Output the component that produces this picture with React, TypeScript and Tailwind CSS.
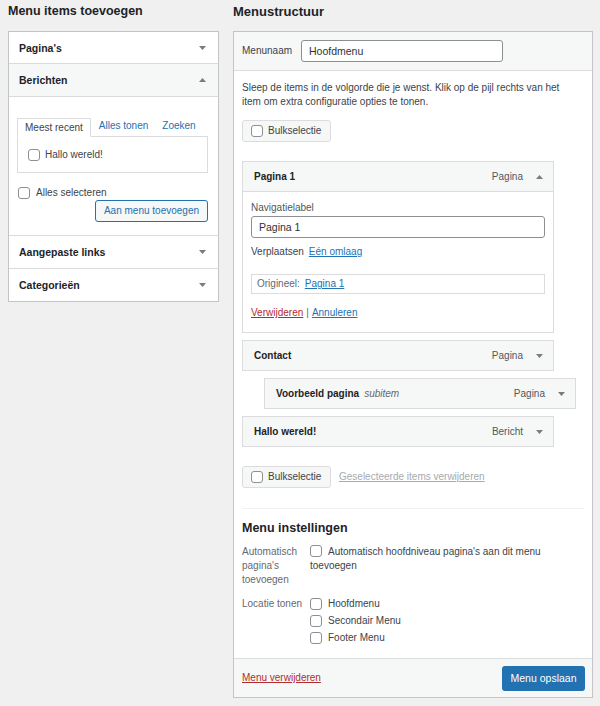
import React from 'react';

const Arrow = ({ up = false }: { up?: boolean }) => (
  <svg width="7" height="4" viewBox="0 0 7 4" className="shrink-0 text-[#787c82]">
    <polygon points={up ? '0,4 7,4 3.5,0' : '0,0 7,0 3.5,4'} fill="currentColor" />
  </svg>
);

const Check = ({ className = '' }: { className?: string }) => (
  <span className={`inline-block w-[12px] h-[12px] shrink-0 rounded-[3px] border border-[#8c8f94] bg-white ${className}`} />
);

const SectionHead = ({ label, open = false, h = 'h-[33px]' }: { label: string; open?: boolean; h?: string }) => (
  <div
    className={`flex items-center justify-between ${h} pl-[10px] pr-[12px] border-b border-[#dcdcde] ${
      open ? 'bg-[#f6f7f7]' : 'bg-white'
    }`}
  >
    <span className="text-[10.5px] font-bold text-[#1d2327]">{label}</span>
    <Arrow up={open} />
  </div>
);

const ItemHead = ({
  title,
  sub,
  type,
  open = false,
  className = '',
}: {
  title: string;
  sub?: string;
  type: string;
  open?: boolean;
  className?: string;
}) => (
  <div
    className={`flex items-center h-[31px] pl-[11px] pr-[10px] border border-[#dcdcde] bg-[#f6f7f7] ${className}`}
  >
    <span className="font-bold text-[#1d2327]">{title}</span>
    {sub && <span className="ml-[5px] italic text-[#646970]">{sub}</span>}
    <span className="ml-auto mr-[13px] text-[#50575e]">{type}</span>
    <Arrow up={open} />
  </div>
);

const BulkButton = () => (
  <div className="flex items-center w-[89px] h-[22px] pl-[8px] gap-[5px] rounded-[3px] border border-[#dcdcde] bg-[#f6f7f7] text-[#3c434a]">
    <Check />
    <span>Bulkselectie</span>
  </div>
);

const App: React.FC = () => {
  return (
    <div className="w-[600px] h-[706px] bg-[#f0f0f1] flex gap-[14px] px-[8px] text-[10px] leading-[14px] text-[#3c434a] font-['Liberation_Sans',Arial,sans-serif]">
      {/* linker kolom */}
      <div className="w-[211px] shrink-0">
        <h2 className="h-[31px] pt-[3px] text-[12.5px] leading-[17px] font-bold text-[#1d2327]">
          Menu items toevoegen
        </h2>
        <div className="border border-[#c3c4c7] bg-white">
          <SectionHead label="Pagina's" h="h-[32px]" />
          <SectionHead label="Berichten" open />
          <div className="pt-[21px] pl-[8px] pr-[10px] pb-[13px] border-b border-[#dcdcde]">
            <div className="flex items-end h-[19px] -mb-px relative">
              <div className="h-[19px] px-[7px] flex items-center border border-[#dcdcde] border-b-white bg-white text-[#3c434a]">
                Meest recent
              </div>
              <span className="ml-[8px] mb-[4px] text-[#2271b1]">Alles tonen</span>
              <span className="ml-[14px] mb-[4px] text-[#2271b1]">Zoeken</span>
            </div>
            <div className="h-[37px] pl-[10px] flex items-center gap-[5px] border border-[#dcdcde]">
              <Check />
              <span>Hallo wereld!</span>
            </div>
            <div className="mt-[13px] flex items-center gap-[6px] pl-[1px]">
              <Check />
              <span>Alles selecteren</span>
            </div>
            <div className="flex justify-end">
              <div className="w-[113px] h-[22px] flex items-center justify-center rounded-[3px] border border-[#2271b1] bg-[#f6f7f7] text-[#2271b1]">
                Aan menu toevoegen
              </div>
            </div>
          </div>
          <SectionHead label="Aangepaste links" />
          <div className="flex items-center justify-between h-[32px] pl-[10px] pr-[12px]">
            <span className="text-[10.5px] font-bold text-[#1d2327]">Categorieën</span>
            <Arrow />
          </div>
        </div>
      </div>

      {/* rechter kolom */}
      <div className="w-[360px] shrink-0">
        <h2 className="h-[31px] pt-[3px] text-[13px] leading-[17px] font-bold text-[#1d2327]">Menustructuur</h2>
        <div className="border border-[#c3c4c7] bg-white">
          <div className="h-[39px] flex items-center px-[8px] bg-[#f6f7f7] border-b border-[#dcdcde]">
            <span className="w-[59px] shrink-0">Menunaam</span>
            <div className="w-[202px] h-[22px] flex items-center pl-[7px] rounded-[3px] border border-[#8c8f94] bg-white text-[10.5px] text-[#2c3338]">
              Hoofdmenu
            </div>
          </div>

          <div className="px-[8px] pt-[10px] pb-[12px]">
            <p className="max-w-[330px]">
              Sleep de items in de volgorde die je wenst. Klik op de pijl rechts van het item om extra configuratie
              opties te tonen.
            </p>
            <div className="mt-[11px]">
              <BulkButton />
            </div>

            <div className="mt-[19px] w-[312px]">
              <ItemHead title="Pagina 1" type="Pagina" open />
              <div className="h-[141px] px-[8px] pt-[9px] border-x border-b border-[#dcdcde]">
                <div className="text-[#50575e]">Navigatielabel</div>
                <div className="mt-[1px] h-[22px] flex items-center pl-[7px] rounded-[3px] border border-[#8c8f94] text-[10.5px] text-[#2c3338]">
                  Pagina 1
                </div>
                <div className="mt-[7px] flex gap-[5px]">
                  <span>Verplaatsen</span>
                  <span className="text-[#2271b1] underline">Eén omlaag</span>
                </div>
                <div className="mt-[15px] h-[20px] flex items-center pl-[5px] gap-[5px] border border-[#dcdcde] text-[#646970]">
                  <span>Origineel:</span>
                  <span className="text-[#2271b1] underline">Pagina 1</span>
                </div>
                <div className="mt-[12px] flex gap-[3px]">
                  <span className="text-[#b32d2e] underline">Verwijderen</span>
                  <span className="text-[#646970]">|</span>
                  <span className="text-[#2271b1] underline">Annuleren</span>
                </div>
              </div>
            </div>
            <ItemHead title="Contact" type="Pagina" className="mt-[7px] w-[312px]" />
            <ItemHead title="Voorbeeld pagina" sub="subitem" type="Pagina" className="mt-[7px] ml-[22px] w-[312px]" />
            <ItemHead title="Hallo wereld!" type="Bericht" className="mt-[7px] w-[312px]" />

            <div className="mt-[19px] flex items-center gap-[8px]">
              <BulkButton />
              <span className="text-[#a7aaad] underline">Geselecteerde items verwijderen</span>
            </div>

            <div className="mt-[20px] h-px bg-[#f0f0f1]" />

            <h3 className="mt-[11px] text-[12.5px] leading-[16px] font-bold text-[#1d2327]">Menu instellingen</h3>

            <div className="mt-[9px] flex">
              <div className="w-[68px] shrink-0 text-[#646970]">
                Automatisch pagina's toevoegen
              </div>
              <div className="flex-1">
                <Check className="align-[-2px] mr-[6px]" />
                Automatisch hoofdniveau pagina's aan dit menu toevoegen
              </div>
            </div>

            <div className="mt-[8px] flex">
              <div className="w-[68px] shrink-0 h-[17px] flex items-center text-[#646970]">Locatie tonen</div>
              <div className="flex flex-col">
                {['Hoofdmenu', 'Secondair Menu', 'Footer Menu'].map((l) => (
                  <div key={l} className="h-[17px] flex items-center gap-[6px]">
                    <Check />
                    <span>{l}</span>
                  </div>
                ))}
              </div>
            </div>
          </div>

          <div className="h-[39px] flex items-center justify-between pl-[8px] pr-[7px] bg-[#f6f7f7] border-t border-[#dcdcde]">
            <span className="text-[#b32d2e] underline">Menu verwijderen</span>
            <div className="w-[83px] h-[25px] flex items-center justify-center rounded-[3px] bg-[#2271b1] text-white text-[10.5px]">
              Menu opslaan
            </div>
          </div>
        </div>
      </div>
    </div>
  );
};

export default App;
